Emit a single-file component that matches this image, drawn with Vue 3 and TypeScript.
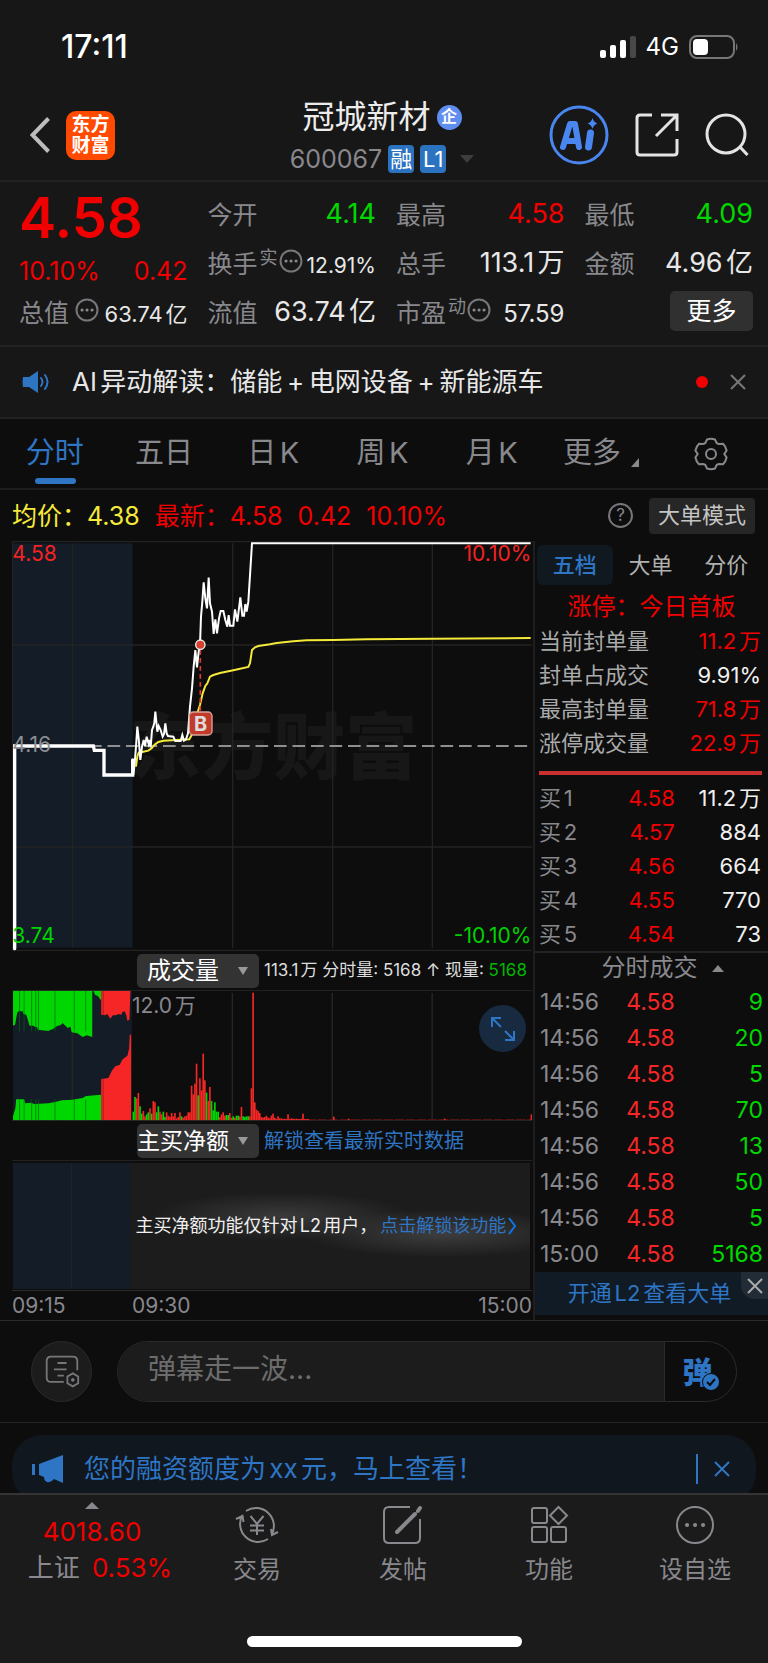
<script setup lang="ts">
import { ref } from 'vue'

type Tone = 'up' | 'down' | 'plain'
interface Quote { label: string; value: string; tone: Tone; sup?: string; hint?: boolean; size?: 'sm' | 'md' | 'lg' }

const quotesTop: Quote[] = [
  { label: '今开', value: '4.14', tone: 'down' },
  { label: '最高', value: '4.58', tone: 'up' },
  { label: '最低', value: '4.09', tone: 'down' },
  { label: '换手', value: '12.91%', tone: 'plain', sup: '实', hint: true, size: 'sm' },
  { label: '总手', value: '113.1万', tone: 'plain' },
  { label: '金额', value: '4.96亿', tone: 'plain' },
]
const quotesBottom: Quote[] = [
  { label: '总值', value: '63.74亿', tone: 'plain', hint: true, size: 'md' },
  { label: '流值', value: '63.74亿', tone: 'plain' },
  { label: '市盈', value: '57.59', tone: 'plain', sup: '动', hint: true, size: 'lg' },
]

const periods = ['分时', '五日', '日K', '周K', '月K', '更多']
const period = ref('分时')
const bookTabs = ['五档', '大单', '分价']
const bookTab = ref('五档')
const message = ref('')
const volumeMetric = ref('成交量')
const flowMetric = ref('主买净额')

const limitStats = [
  { label: '当前封单量', value: '11.2万', tone: 'up' },
  { label: '封单占成交', value: '9.91%', tone: 'plain' },
  { label: '最高封单量', value: '71.8万', tone: 'up' },
  { label: '涨停成交量', value: '22.9万', tone: 'up' },
]
const bids = [
  ['买1', '4.58', '11.2万'],
  ['买2', '4.57', '884'],
  ['买3', '4.56', '664'],
  ['买4', '4.55', '770'],
  ['买5', '4.54', '73'],
]
const trades = [
  ['14:56', '4.58', '9'],
  ['14:56', '4.58', '20'],
  ['14:56', '4.58', '5'],
  ['14:56', '4.58', '70'],
  ['14:56', '4.58', '13'],
  ['14:56', '4.58', '50'],
  ['14:56', '4.58', '5'],
  ['15:00', '4.58', '5168'],
]

const auctionLine = '44,1256 44,648 280,648 283,661 312,661 312,735 398,735 398,690'
const priceLine =
  '400,735 404,700 408,650 412,590 416,625 421,690 426,650 431,630 435,648 440,620 446,642 449,630 452,652 456,600 460,590 463,578 466,545 470,585 472,605 476,588 482,600 488,620 492,612 496,580 500,610 504,618 520,620 526,633 542,633 547,615 552,632 558,628 564,610 570,530 576,475 581,410 586,360 591,412 596,365 600,344 603,260 607,215 611,157 616,205 621,235 626,143 630,220 636,245 641,312 646,268 651,310 657,265 662,243 670,243 676,270 682,290 686,255 690,287 700,287 705,238 712,275 721,202 727,257 732,257 736,222 740,245 745,215 751,120 756,40 1592,40'
const averageLine =
  '408,710 412,680 416,668 430,665 445,662 455,655 463,645 475,636 490,632 530,630 568,628 575,615 582,595 590,555 600,525 608,490 616,468 622,460 630,440 640,435 660,429 700,421 745,411 750,400 756,360 765,352 775,348 810,343 830,339 880,334 920,331 1000,330 1100,328 1300,326 1592,324'

const greenTop =
  '38,138 38,243 44,240 50,205 54,200 66,200 68,208 76,210 80,222 86,243 98,243 100,246 108,248 110,255 140,259 152,254 155,252 165,245 178,240 182,235 190,243 197,250 205,246 208,263 225,266 240,277 252,272 268,277 268,138 272,138 276,150 285,155 292,165 294,165 294,138'
const redTop =
  '294,138 294,210 305,212 312,208 320,222 328,212 338,212 342,208 353,210 355,203 362,200 367,212 370,228 376,225 379,138'
const greenBase =
  '38,527 38,515 45,490 47,464 70,464 74,476 90,474 100,478 140,476 160,472 180,467 210,465 240,460 250,454 294,450 294,527'
const redBase =
  '294,527 294,403 315,400 325,378 335,365 348,360 355,345 370,333 375,312 377,270 381,270 381,527'
const stripes = [57, 70, 92, 104, 112, 160, 216, 249]

const minuteVolumes =
  '26g 70g 66r 82r 42g 20g 28r 12r 18g 24g 36r 20g 58r 54r 24g 42g 26r 18r 26g 10g 24r 14r 10r 22r 12r 22r 6r 10r 24r 12g 8r 12r 14r 24r 24r 104r 78r 110r 170r 75g 126r 90r 200r 120r 83g 58r 100r 58g 30g 54g 26g 26g 10r 18r 24r 14r 16g 16g 22r 8r 12g 8r 14g 14g 12r 40r 12g 10g 12g 12g 12r 96r 383r 54r 32r 28r 22r 10r 8r 10r 14r 8r 6r 14r 20r 8r 4r 12r 6r 6r 4r 5r 4r 18r 4r 6r 5r 4r 5r 4r 4r 5r 20r 4r 4r 4r'
const volumeBars = minuteVolumes.split(' ').map((item, index) => ({
  x: 385 + index * 4.83,
  height: parseInt(item, 10),
  tone: item.endsWith('g') ? 'bar-down' : 'bar-up',
}))
const lateBars = [
  { x: 967, height: 11 }, { x: 1010, height: 5 }, { x: 1289, height: 5 }, { x: 1541, height: 18 },
]
</script>

<template>
  <div class="screen">
    <div class="top">
      <div class="status">
        <span class="clock">17:11</span>
        <div class="status-right">
          <svg class="signal" viewBox="0 0 36 22" aria-hidden="true">
            <rect x="0" y="14" width="6" height="8" rx="2" />
            <rect x="10" y="9" width="6" height="13" rx="2" />
            <rect x="20" y="4" width="6" height="18" rx="2" />
            <rect x="30" y="0" width="6" height="22" rx="2" class="faint" />
          </svg>
          <span>4G</span>
          <svg class="battery" viewBox="0 0 50 24" aria-hidden="true">
            <rect x="1" y="1" width="44" height="22" rx="7" fill="none" stroke="#777" stroke-width="2" />
            <rect x="4" y="4" width="15" height="16" rx="4" fill="#fff" />
            <path d="M47 8q3 4 0 8z" fill="#777" />
          </svg>
        </div>
      </div>

      <header class="header">
        <button class="icon-btn back" aria-label="返回">
          <svg viewBox="0 0 20 36"><path d="M18.500 1.500 2.500 18l16 16.500" /></svg>
        </button>
        <a href="#" class="logo"><span>东方</span><span>财富</span></a>
        <div class="title">
          <h1>冠城新材<i class="verified">企</i></h1>
          <button class="code">600067<b>融</b><b>L1</b><i class="caret"></i></button>
        </div>
        <div class="tools">
          <button class="icon-btn" aria-label="AI">
            <svg class="ai" viewBox="0 0 60 60">
              <circle cx="30" cy="30" r="28" fill="none" stroke="#4a86f0" stroke-width="3" />
              <path d="M14 42 21 19h5l4 23M17.500 36h11" fill="none" stroke="#4a86f0" stroke-width="6" stroke-linejoin="round" stroke-linecap="round" />
              <path d="M41.500 28 39.500 42" fill="none" stroke="#4a86f0" stroke-width="7" stroke-linecap="round" />
              <path d="M43.500 13q1.200 4.300 5 5.500-3.800 1.200-5 5.500-1.200-4.300-5-5.500 3.800-1.200 5-5.500z" fill="#4a86f0" />
            </svg>
          </button>
          <button class="icon-btn" aria-label="分享">
            <svg class="share" viewBox="0 0 44 44"><path d="M17 2H5q-3 0-3 3v34q0 3 3 3h34q3 0 3-3V26M26 2h16v16M42 2 21 23" /></svg>
          </button>
          <button class="icon-btn" aria-label="搜索">
            <svg class="search" viewBox="0 0 44 44"><circle cx="21" cy="21" r="19" /><path d="M35 34l7.500 8" /></svg>
          </button>
        </div>
      </header>

      <section class="quotes">
        <div class="last">
          <strong>4.58</strong>
          <div><span>10.10%</span><span>0.42</span></div>
        </div>
        <div v-for="q in quotesTop" :key="q.label" class="quote">
          <span class="name">{{ q.label }}<sup v-if="q.sup">{{ q.sup }}</sup><svg v-if="q.hint" class="dots" viewBox="0 0 24 24"><circle cx="12" cy="12" r="10.500" fill="none" stroke="#77777b" stroke-width="2" /><path d="M7 12h.1M12 12h.1M17 12h.1" stroke="#8a8a8e" stroke-width="3" stroke-linecap="round" /></svg></span>
          <span class="value" :class="[q.tone, q.size]">{{ q.value }}</span>
        </div>
        <div v-for="q in quotesBottom" :key="q.label" class="quote">
          <span class="name">{{ q.label }}<sup v-if="q.sup">{{ q.sup }}</sup><svg v-if="q.hint" class="dots" viewBox="0 0 24 24"><circle cx="12" cy="12" r="10.500" fill="none" stroke="#77777b" stroke-width="2" /><path d="M7 12h.1M12 12h.1M17 12h.1" stroke="#8a8a8e" stroke-width="3" stroke-linecap="round" /></svg></span>
          <span class="value" :class="[q.tone, q.size]">{{ q.value }}</span>
        </div>
        <div class="more-cell"><button class="more">更多</button></div>
      </section>

      <section class="notice">
        <svg class="speaker" viewBox="0 0 28 24" aria-hidden="true">
          <path d="M1 7h6l9-6v22l-9-6H1q-1-5 0-10z" fill="#2e75c4" />
          <path d="M19 8q3 4 0 8M23 5q5 7 0 14" fill="none" stroke="#2e75c4" stroke-width="2" stroke-linecap="round" />
        </svg>
        <a href="#">AI异动解读：储能&thinsp;+&thinsp;电网设备&thinsp;+&thinsp;新能源车</a>
        <i class="red-dot"></i>
        <button class="icon-btn" aria-label="关闭"><svg class="close" viewBox="0 0 16 16"><path d="M1 1l14 14M15 1 1 15" /></svg></button>
      </section>
    </div>

    <nav class="periods">
      <button v-for="p in periods" :key="p" :class="{ active: p === period }" @click="period = p">{{ p }}<i v-if="p === '更多'" class="corner"></i></button>
      <button aria-label="设置">
        <svg class="gear" viewBox="0 0 36 36"><path d="M14 3.500q4-1.500 8 0l1.800 3.700q1.200.7 2.500.7l3.700-.2q3 2.800 3.600 6.800L31.300 18l2.300 3.500q-.8 4-3.600 6.800l-3.700-.2q-1.300 0-2.500.7L22 32.500q-4 1.500-8 0l-1.800-3.700q-1.200-.7-2.500-.7l-3.700.2q-2.800-2.800-3.600-6.800L4.700 18l-2.300-3.500q.8-4 3.600-6.800l3.700.2q1.300 0 2.500-.7z" /><circle cx="18" cy="18" r="5" /></svg>
      </button>
    </nav>

    <section class="summary">
      <span class="avg">均价：4.38</span>
      <span>最新：4.58</span>
      <span>0.42</span>
      <span>10.10%</span>
      <button class="icon-btn help" aria-label="帮助">?</button>
      <button class="mode">大单模式</button>
    </section>

    <main class="board">
      <div class="charts">
        <svg class="price-chart" viewBox="36 33 1560 1230" role="img" aria-label="分时走势">
          <rect x="38" y="40" width="360" height="1213" fill="#131c27" />
          <text x="388" y="728" class="watermark">东方财富</text>
          <g stroke="#232323" stroke-width="4" fill="none">
            <path d="M36 35H1596M36 345H1596M36 951H1596M36 1261H1596M38 35V1261M218 40V1253M698 40V1253M998 40V1253M1297 40V1253" />
          </g>
          <path d="M45 648H1596" stroke="#8e8e93" stroke-width="6" stroke-dasharray="38 17.500" />
          <polyline :points="averageLine" fill="none" stroke="#f5ea3a" stroke-width="6" />
          <path d="M601 360V545" stroke="#e23a2c" stroke-width="5" stroke-dasharray="14 10" />
          <polyline :points="auctionLine" fill="none" stroke="#fff" stroke-width="10" stroke-linecap="round" />
          <polyline :points="priceLine" fill="none" stroke="#fff" stroke-width="6" />
          <circle cx="601" cy="344" r="14" fill="#d6402f" stroke="#eee" stroke-width="4" />
          <rect x="568" y="546" width="68" height="69" rx="12" fill="#c23a2a" stroke="#d8a49c" stroke-width="4" />
          <text x="602" y="604" text-anchor="middle" class="marker">B</text>
          <text x="37" y="93" class="axis" fill="#f22323">4.58</text>
          <text x="37" y="667" class="axis" fill="#8e8e93">4.16</text>
          <text x="37" y="1238" class="axis" fill="#00d200">3.74</text>
          <text x="1594" y="93" class="axis" text-anchor="end" fill="#f22323">10.10%</text>
          <text x="1594" y="1238" class="axis" text-anchor="end" fill="#00d200">-10.10%</text>
        </svg>

        <div class="metric">
          <label class="picker"><select v-model="volumeMetric" class="wide" aria-label="副图指标一"><option>成交量</option></select></label>
          <p>113.1万 分时量: 5168 ↑ 现量: <span class="down">5168</span></p>
        </div>

        <div class="volume">
          <svg viewBox="35 136 1510 393" preserveAspectRatio="none" role="img" aria-label="成交量">
            <rect x="38" y="138" width="345" height="389" fill="#131c27" />
            <path d="M210 138V527M675 145V525M965 145V525M1255 145V525" stroke="#262626" stroke-width="4" />
            <polygon :points="greenTop" class="bar-down" />
            <polygon :points="greenBase" class="bar-down" />
            <path v-for="s in stripes" :key="s" :d="`M${s} 138V260M${s} 464V527`" class="stripe" />
            <polygon :points="redTop" class="bar-up" />
            <polygon :points="redBase" class="bar-up" />
            <path d="M300 138V210M300 403V527" class="stripe-red" />
            <path d="M890 525H1545" stroke="#6d1515" stroke-width="3" stroke-dasharray="28 4" />
            <rect v-for="(bar, i) in volumeBars" :key="i" :x="bar.x" :y="527 - bar.height" width="4.830" :height="bar.height" :class="bar.tone" />
            <rect v-for="bar in lateBars" :key="bar.x" :x="bar.x" :y="527 - bar.height" width="5" :height="bar.height" class="bar-up" />
            <path d="M35 137H1545M35 528H1545" stroke="#2a2a2a" stroke-width="3" />
          </svg>
          <span class="peak">12.0万</span>
          <button class="expand" aria-label="放大">
            <svg viewBox="0 0 24 24"><path d="M1 10V1h9M1 1l9 9M23 14v9h-9M23 23l-9-9" /></svg>
          </button>
        </div>

        <div class="metric">
          <label class="picker"><select v-model="flowMetric" aria-label="副图指标二"><option>主买净额</option></select></label>
          <a href="#" class="unlock">解锁查看最新实时数据</a>
        </div>

        <div class="flow">
          <div class="auction"><i></i><i></i></div>
          <p>主买净额功能仅针对L2用户，<a href="#">点击解锁该功能<svg viewBox="0 0 10 18"><path d="M2 1l6 8-6 8" /></svg></a></p>
        </div>

        <div class="times"><span>09:15</span><span>09:30</span><span>15:00</span></div>
      </div>

      <aside class="book">
        <div class="book-tabs">
          <button v-for="t in bookTabs" :key="t" :class="{ active: t === bookTab }" @click="bookTab = t">{{ t }}</button>
        </div>
        <h2>涨停：今日首板</h2>
        <table class="stats">
          <tbody>
            <tr v-for="s in limitStats" :key="s.label"><th scope="row">{{ s.label }}</th><td :class="s.tone">{{ s.value }}</td></tr>
          </tbody>
        </table>
        <hr />
        <table class="levels">
          <tbody>
            <tr v-for="b in bids" :key="b[0]"><th scope="row">{{ b[0] }}</th><td class="up">{{ b[1] }}</td><td>{{ b[2] }}</td></tr>
          </tbody>
        </table>
        <button class="ticks-head">分时成交<i></i></button>
        <table class="ticks">
          <tbody>
            <tr v-for="(t, i) in trades" :key="i"><th scope="row">{{ t[0] }}</th><td>{{ t[1] }}</td><td class="down">{{ t[2] }}</td></tr>
          </tbody>
        </table>
        <div class="upsell">
          <a href="#">开通L2查看大单</a>
          <button aria-label="关闭"><svg class="close" viewBox="0 0 16 16"><path d="M1 1l14 14M15 1 1 15" /></svg></button>
        </div>
      </aside>
    </main>

    <section class="barrage">
      <button class="round" aria-label="弹幕设置">
        <svg viewBox="0 0 40 40"><path d="M37 18V8q0-5-5-5H8Q3 3 3 8v18q0 5 5 5h14M15 10h10M11 17h14M15 24h7M32 21.500l6 3.500v7.500L32 36l-6-3.500V25z" /><circle cx="32" cy="28.800" r="2" fill="#77777b" stroke="none" /></svg>
      </button>
      <div class="field">
        <input v-model="message" type="text" placeholder="弹幕走一波..." aria-label="弹幕走一波" />
        <button aria-label="弹幕开关">弹<svg viewBox="0 0 18 18"><circle cx="9" cy="9" r="8.500" fill="#2e75c4" stroke="#0d0d0d" /><path d="M5 9l3 3 5-6" fill="none" stroke="#0d0d0d" stroke-width="2" /></svg></button>
      </div>
    </section>

    <section class="promo-area">
      <div class="promo">
        <svg class="horn" viewBox="0 0 32 28" aria-hidden="true"><path d="M31 0v28l-9-4q-3 4-7 3-3-1-3-5L7 20V9z" /><path d="M0 9h3v11H0z" /></svg>
        <a href="#">您的融资额度为xx元，马上查看！</a>
        <button aria-label="关闭"><svg class="close" viewBox="0 0 16 16"><path d="M1 1l14 14M15 1 1 15" /></svg></button>
      </div>
    </section>

    <footer class="dock">
      <nav>
        <a href="#" class="index"><i></i><span class="up">4018.60</span><span class="market">上证<b class="up">0.53%</b></span></a>
        <a href="#">
          <svg viewBox="0 0 44 40"><path d="M11 6A18 18 0 0 1 36.500 30M33 34A18 18 0 0 1 7.500 10M1 14l6.500-3 1 6M43 27l-6 3-1-6M15.500 11l6.500 8 6.500-8M22 19v11M15 20.500h14M15 25.500h14" /></svg>
          <span>交易</span>
        </a>
        <a href="#">
          <svg viewBox="0 0 44 40"><path d="M29 2H8Q3 2 3 7v26q0 5 5 5h26q5 0 5-5V14" /><path d="M39 3l-2 3M34 9 20 23l-4 4" class="pen" /></svg>
          <span>发帖</span>
        </a>
        <a href="#">
          <svg viewBox="0 0 44 40"><rect x="5" y="3" width="15" height="15" rx="2" /><rect x="5" y="22" width="15" height="15" rx="2" /><rect x="24" y="22" width="15" height="15" rx="2" /><path d="M31.500 2l8.500 8.500-8.500 8.500-8.500-8.500z" /></svg>
          <span>功能</span>
        </a>
        <a href="#">
          <svg viewBox="0 0 44 40"><circle cx="22" cy="20" r="18" /><path d="M14 20h.1M22 20h.1M30 20h.1" class="pen" /></svg>
          <span>设自选</span>
        </a>
      </nav>
      <i class="home"></i>
    </footer>
  </div>
</template>

<style>
body { background: #0d0d0d; }
</style>

<style scoped>
.screen {
  font-family: Inter, "Noto Sans CJK SC", sans-serif;
  color: #e8e8e8;
  background: #0d0d0d;
  line-height: 1.2;
  text-autospace: normal;
}
.screen * { box-sizing: border-box; }
button, input, select {
  font: inherit; color: inherit; background: none; border: 0; padding: 0; margin: 0; border-radius: 0;
  text-autospace: inherit;
}
a { color: inherit; text-decoration: none; }
i { font-style: normal; }
svg { display: block; }
h1, h2, p { margin: 0; font-weight: 400; }
.up { color: #f00000; }
.down { color: #00d800; }
.icon-btn { display: flex; flex: none; }
.close { width: 16px; height: 16px; fill: none; stroke: #77777b; stroke-width: 2; }

.top { background: #171717; }
.status { display: flex; justify-content: space-between; align-items: center; height: 94px; padding: 0 29px 0 61px; }
.clock { font-size: 32px; font-weight: 500; color: #fff; }
.status-right { display: flex; align-items: center; gap: 10px; font-size: 24px; color: #fff; }
.signal { width: 36px; height: 22px; fill: #fff; }
.signal .faint { fill: #48484a; }
.battery { width: 50px; height: 24px; }

.header { display: flex; align-items: center; height: 88px; padding: 0 19px 4px 30px; border-bottom: 2px solid #222; }
.back svg { width: 20px; height: 36px; fill: none; stroke: #bdbdbd; stroke-width: 4; }
.logo {
  display: flex; flex-direction: column; justify-content: center; align-items: center; flex: none;
  width: 49px; height: 49px; margin-left: 16px; border-radius: 10px;
  background: #ff4a00; color: #fff; font-size: 19px; font-weight: 700; line-height: 21px;
}
.title { flex: 1; display: flex; flex-direction: column; align-items: center; padding: 4px 0 0 100px; }
.title h1 { display: flex; align-items: center; gap: 6px; height: 44px; font-size: 32px; color: #ececec; }
.verified {
  display: grid; place-items: center; width: 25px; height: 25px; border-radius: 50%;
  background: #5f8df0; color: #fff; font-size: 16px; font-weight: 700;
}
.code { display: flex; align-items: center; gap: 6px; height: 40px; font-size: 25px; color: #88888d; }
.code b { display: grid; place-items: center; min-width: 26px; height: 28px; padding: 0 2px; border-radius: 4px; background: #2b72c0; color: #fff; font-size: 22px; font-weight: 400; }
.code .caret { margin-left: 8px; border: 7px solid transparent; border-top: 8px solid #3d3d3d; border-bottom: 0; }
.tools { display: flex; align-items: center; gap: 26px; }
.ai { width: 60px; height: 60px; }
.share, .search { width: 44px; height: 44px; fill: none; stroke: #e4e4e4; stroke-width: 3; }

.quotes { display: grid; grid-template-columns: repeat(4, 1fr); grid-template-rows: repeat(3, 49px); column-gap: 20px; padding: 8px 15px 8px 19px; border-bottom: 2px solid #222; }
.last { grid-row: span 2; color: #f00000; }
.last strong { display: block; height: 61px; font-size: 56px; line-height: 56px; font-weight: 600; }
.last div { display: flex; justify-content: space-between; font-size: 25px; line-height: 40px; }
.quote { display: flex; justify-content: space-between; align-items: center; white-space: nowrap; }
.name { display: flex; align-items: center; font-size: 25px; color: #88888d; }
.name sup { align-self: flex-start; font-size: 18px; line-height: 18px; vertical-align: baseline; padding-left: 2px; }
.dots { width: 24px; height: 24px; align-self: flex-start; margin-left: 1px; }
.quotes .name > svg:nth-child(1) { margin-left: 6px; }
.value { font-size: 27px; }
.value.sm { font-size: 21px; padding-top: 4px; }
.value.md { font-size: 22px; padding-top: 4px; }
.value.lg { font-size: 24px; padding-top: 4px; }
.more-cell { display: flex; justify-content: flex-end; align-items: center; }
.more { width: 83px; height: 40px; margin-bottom: 4px; border-radius: 5px; background: #303030; font-size: 25px; color: #fff; }

.notice { display: flex; align-items: center; height: 72px; padding: 0 22px; border-bottom: 2px solid #222; }
.speaker { flex: none; width: 28px; height: 24px; }
.notice a { flex: 1; margin-left: 22px; font-size: 26px; white-space: nowrap; }
.red-dot { width: 12px; height: 12px; margin-right: 22px; border-radius: 50%; background: #f00000; }

.periods { display: grid; grid-template-columns: 110fr 110fr 110fr 110fr 110fr 110fr 112fr; height: 71px; padding-right: 1px; border-bottom: 2px solid #1e1e1e; }
.periods button { position: relative; display: flex; align-items: center; justify-content: center; font-size: 29px; color: #88888d; white-space: nowrap; }
.periods .active { color: #2e75c4; }
.periods .active::after { content: ""; position: absolute; left: 50%; bottom: 4px; width: 41px; height: 6px; margin-left: -20px; border-radius: 3px; background: #2e75c4; }
.corner { align-self: flex-end; margin: 0 0 21px 10px; border-left: 8px solid transparent; border-bottom: 9px solid #88888d; }
.gear { width: 36px; height: 36px; fill: none; stroke: #88888d; stroke-width: 2; }

.summary { display: flex; align-items: center; gap: 15px; height: 51px; padding: 0 13px 0 12px; font-size: 25px; color: #f00000; white-space: nowrap; }
.avg { color: #f5ea3a; }
.help { justify-content: center; align-items: center; width: 25px; height: 25px; margin-left: auto; border: 2px solid #77777b; border-radius: 50%; color: #88888d; font-size: 17px; }
.mode { height: 36px; margin-left: 1px; padding: 0 9px; border-radius: 4px; background: #262626; color: #c4c4c4; font-size: 22px; }

.board { display: grid; grid-template-columns: 533fr 235fr; border-bottom: 1px solid #2a2a2a; }
.charts { min-width: 0; padding: 0 1px 0 12px; }
.price-chart { width: 100%; height: auto; }
.watermark { font-size: 216px; font-weight: 900; fill: #171717; }
.marker { font-size: 60px; font-weight: 700; fill: #ddd; }
.axis { font-size: 63px; }
.metric { display: flex; align-items: center; gap: 5px; height: 39px; padding-left: 125px; white-space: nowrap; }
.metric p { font-size: 17px; color: #ddd; }
.metric .down { color: #00b800; }
.picker { position: relative; flex: none; width: 122px; }
.picker select { appearance: none; display: block; width: 100%; height: 34px; border-radius: 5px; background: #333; color: #fff; font-size: 23px; line-height: 34px; }
.picker select.wide { padding-left: 10px; font-size: 24px; }
.picker::after { content: ""; position: absolute; right: 11px; top: 13px; border: 5px solid transparent; border-top: 8px solid #999; border-bottom: 0; }
.unlock { font-size: 20px; color: #2e75c4; }
.volume { position: relative; }
.volume > svg { width: 100%; height: auto; aspect-ratio: 520 / 131; }
.bar-up { fill: #f62626; }
.bar-down { fill: #00d600; }
.stripe { stroke: #006a0a; stroke-width: 2; }
.stripe-red { stroke: #8d1c1c; stroke-width: 2; }
.peak { position: absolute; left: 120px; top: 3px; font-size: 21px; color: #88888d; }
.expand { position: absolute; right: 6px; top: 15px; display: grid; place-items: center; width: 47px; height: 47px; border-radius: 50%; background: #182a40; }
.expand svg { width: 24px; height: 24px; fill: none; stroke: #2e75c4; stroke-width: 2; }
.flow { display: grid; grid-template-columns: 117fr 402fr; height: 131px; padding: 2px 2px 1px 1px; border-top: 1px solid #222; border-bottom: 1px solid #2c2c2c; }
.auction { display: grid; grid-template-columns: 1fr 1fr; gap: 1px; background: #222; }
.auction i { background: #131c27; }
.flow p {
  display: flex; align-items: center; padding-left: 6px; font-size: 18px; color: #f0f0f0; white-space: nowrap;
  background:
    radial-gradient(ellipse 130px 24px at 38% 42%, #3a3a3a, transparent),
    radial-gradient(ellipse 140px 24px at 78% 56%, #3e3e3e, transparent),
    #1c1c1c;
}
.flow a { display: flex; align-items: center; color: #2e75c4; margin-left: 3px; }
.flow svg { width: 10px; height: 18px; margin-left: 1px; fill: none; stroke: #0a78e8; stroke-width: 2; }
.times { display: flex; align-items: center; height: 29px; font-size: 21px; color: #88888d; }
.times span:nth-child(1) { width: 120px; }
.times span:last-child { margin-left: auto; }

.book { min-width: 0; padding-top: 4px; border-left: 2px solid #1e1e1e; font-size: 22px; color: #f0f0f0; white-space: nowrap; }
.book-tabs { display: grid; grid-template-columns: repeat(3, 1fr); height: 40px; padding: 0 4px 0 2px; }
.book-tabs button { color: #b0b0b0; }
.book-tabs .active { border-radius: 6px; background: #101820; color: #2e75c4; font-weight: 500; }
.book h2 { height: 39px; padding-top: 5px; font-size: 24px; line-height: 34px; text-align: center; color: #f00000; }
.book table { width: 100%; border-collapse: collapse; }
.book th, .book td { height: 34px; padding: 0; line-height: 34px; font-weight: 400; text-align: right; }
.book th { text-align: left; padding-left: 4px; color: #88888d; }
.book td:last-child { padding-right: 7px; }
.stats th { color: #aaa; }
.book hr { height: 4px; margin: 11px 6px 6px 4px; border: 0; background: #c93030; }
.levels, .ticks { table-layout: fixed; }
.levels th, .ticks th { width: 35%; }
.levels td:nth-child(2), .ticks td:nth-child(2) { width: 25%; }
.ticks-head { display: flex; justify-content: center; align-items: center; gap: 14px; width: 100%; height: 33px; padding-left: 22px; border-top: 2px solid #222; font-size: 24px; color: #88888d; }
.ticks-head i { border: 6px solid transparent; border-bottom: 7px solid #88888d; border-top: 0; }
.book .ticks { font-size: 23px; }
.ticks th, .ticks td { height: 36px; }
.book .ticks th { padding-left: 5px; }
.book .ticks td { color: #f62626; }
.book .ticks .down { padding-right: 5px; color: #00d800; }
.upsell { position: relative; display: flex; align-items: center; justify-content: center; height: 43px; padding-right: 4px; background: #101b26; color: #2e75c4; }
.upsell button { position: absolute; right: 0; top: 0; display: grid; place-items: center; width: 27px; height: 27px; border-radius: 0 0 0 14px; background: #222c36; }
.upsell .close { stroke: #aaa; }

.barrage { display: flex; align-items: center; gap: 25px; height: 102px; padding: 0 31px; border-bottom: 1px solid #242424; }
.round { display: grid; place-items: center; flex: none; width: 61px; height: 61px; border: 1px solid #2a2a2a; border-radius: 50%; background: #1c1c1c; }
.round svg { width: 40px; height: 36px; fill: none; stroke: #77777b; stroke-width: 2; }
.field { flex: 1; display: flex; height: 61px; overflow: hidden; border: 1px solid #2a2a2a; border-radius: 31px; }
.field input { flex: 1; min-width: 0; padding: 0 30px 4px; background: #1c1c1c; font-size: 28px; outline: 0; }
.field input::placeholder { color: #6c6c6c; opacity: 1; }
.field button { position: relative; width: 72px; padding-right: 6px; border-left: 1px solid #2a2a2a; color: #2e75c4; font-size: 30px; font-weight: 900; }
.field button svg { position: absolute; right: 16px; bottom: 10px; width: 18px; height: 18px; }

.promo-area { height: 70px; padding: 12px 12px 0; overflow: hidden; }
.promo { display: flex; align-items: center; height: 68px; padding: 0 26px 0 20px; border-radius: 30px; background: #10171e; color: #2e75c4; }
.horn { flex: none; width: 32px; height: 28px; fill: #2e75c4; }
.promo a { flex: 1; margin-left: 20px; font-size: 26px; white-space: nowrap; }
.promo button { display: flex; align-items: center; height: 30px; padding-left: 16px; border-left: 2px solid #2e75c4; }
.promo .close { stroke: #2e75c4; }

.dock { display: flex; flex-direction: column; align-items: center; height: 170px; border-top: 2px solid #343434; background: #1b1b1b; }
.dock nav { display: grid; grid-template-columns: 184fr 146fr 146fr 146fr 146fr; width: 100%; height: 141px; }
.dock nav a { display: flex; flex-direction: column; align-items: center; padding-top: 10px; gap: 7px; font-size: 24px; line-height: 36px; color: #88888d; }
.dock nav svg { width: 44px; height: 40px; fill: none; stroke: #88888d; stroke-width: 2; }
.dock nav .pen { stroke-width: 4; stroke-linecap: round; }
.dock nav .index { gap: 0; padding: 7px 0 0; font-size: 26px; }
.index i { margin-bottom: 5px; border: 7px solid transparent; border-bottom: 7px solid #88888d; border-top: 0; }
.index .market { display: flex; gap: 12px; padding-left: 16px; white-space: nowrap; }
.index b { font-weight: 400; }
.home { width: 275px; height: 11px; border-radius: 6px; background: #fff; }
</style>
